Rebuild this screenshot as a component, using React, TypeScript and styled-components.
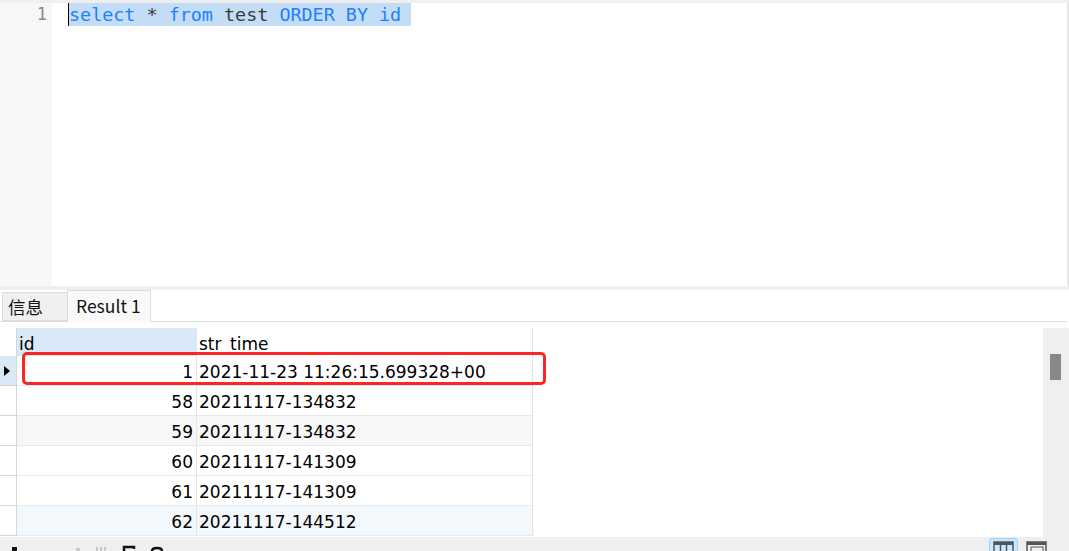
import React from "react";
import styled, { createGlobalStyle } from "styled-components";

const GlobalStyle = createGlobalStyle`
	body {
		margin: 0;
		background: #ffffff;
		overflow: hidden;
	}
`;

type Row = {
	id: number;
	time: string;
	tone: "plain" | "gray" | "blue";
};

const rows: Row[] = [
	{ id: 1, time: "2021-11-23 11:26:15.699328+00", tone: "plain" },
	{ id: 58, time: "20211117-134832", tone: "plain" },
	{ id: 59, time: "20211117-134832", tone: "gray" },
	{ id: 60, time: "20211117-141309", tone: "plain" },
	{ id: 61, time: "20211117-141309", tone: "plain" },
	{ id: 62, time: "20211117-144512", tone: "blue" },
];

const App = () => {
	return (
		<>
			<GlobalStyle />
			<Page>
				<TopStrip />
				<Editor>
					<Gutter>
						<LineNo>1</LineNo>
					</Gutter>
					<Code>
						<Selected>
							<Kw>select</Kw> * <Kw>from</Kw> test <Kw>ORDER BY</Kw> <Kw>id</Kw>
						</Selected>
					</Code>
				</Editor>
				<Splitter />
				<TabBar>
					<Tab active={false}>信息</Tab>
					<Tab active={true}>Result 1</Tab>
				</TabBar>
				<GridArea>
					<Grid>
						<IndicatorHead />
						<HeadCell selected={true}>id</HeadCell>
						<HeadCell selected={false}>str_time</HeadCell>
						{rows.map((r, i) => (
							<React.Fragment key={r.id}>
								<Indicator current={i === 0}>
									{i === 0 && (
										<svg width="6" height="10" viewBox="0 0 6 10">
											<path d="M0 0 L6 5 L0 10 Z" fill="#000" />
										</svg>
									)}
								</Indicator>
								<IdCell tone={r.tone}>
									{r.id}
									{i === 0 && <Mark />}
								</IdCell>
								<Cell tone={r.tone}>{r.time}</Cell>
							</React.Fragment>
						))}
					</Grid>
					<ScrollTrack>
						<Thumb />
					</ScrollTrack>
				</GridArea>
				<Toolbar>
					<Tools>
						<svg width="200" height="14" viewBox="0 0 200 14">
							<rect x="12" y="10" width="5" height="4" fill="#111" />
							<rect x="76" y="11" width="4" height="3" fill="#c8c8c8" />
							<rect x="96" y="10" width="2" height="4" fill="#c8c8c8" />
							<rect x="100" y="10" width="2" height="4" fill="#c8c8c8" />
							<rect x="104" y="10" width="2" height="4" fill="#c8c8c8" />
							<path d="M124 14 V10 H134 V12" stroke="#111" strokeWidth="2.5" fill="none" />
							<path d="M152 14 C152 10 162 10 162 14" stroke="#111" strokeWidth="2.5" fill="none" />
						</svg>
					</Tools>
					<ViewButtons>
						<ViewButton active={true}>
							<svg width="21" height="12" viewBox="0 0 21 12">
								<rect x="1" y="1" width="19" height="14" fill="none" stroke="#555" strokeWidth="1.5" />
								<rect x="1" y="1" width="19" height="3" fill="#555" />
								<line x1="7.5" y1="3" x2="7.5" y2="14" stroke="#555" strokeWidth="1.5" />
								<line x1="13.5" y1="3" x2="13.5" y2="14" stroke="#555" strokeWidth="1.5" />
							</svg>
						</ViewButton>
						<ViewButton active={false}>
							<svg width="21" height="12" viewBox="0 0 21 12">
								<rect x="1" y="1" width="19" height="14" fill="none" stroke="#555" strokeWidth="1.5" />
								<rect x="1" y="1" width="19" height="3" fill="#555" />
								<rect x="5" y="6" width="12" height="8" fill="none" stroke="#555" strokeWidth="1" />
							</svg>
						</ViewButton>
					</ViewButtons>
				</Toolbar>
			</Page>
		</>
	);
};

const Page = styled.div`
	display: flex;
	flex-direction: column;
	width: 1069px;
	height: 551px;
	overflow: hidden;
	background: #ffffff;
`;

const TopStrip = styled.div`
	height: 3px;
	background: #efefef;
`;

const Editor = styled.div`
	display: flex;
	height: 283px;
	border-right: 2px solid #e6e6e6;
`;

const Gutter = styled.div`
	width: 52px;
	background: #f7f7f7;
	display: flex;
	justify-content: flex-end;
`;

const LineNo = styled.div`
	padding-right: 5px;
	font-family: "DejaVu Sans Mono", "Liberation Mono", monospace;
	font-size: 17px;
	line-height: 23px;
	color: #8a8a8a;
`;

const Code = styled.div`
	flex: 1;
	padding-left: 17px;
	font-family: "DejaVu Sans Mono", "Liberation Mono", monospace;
	font-size: 18.4px;
	line-height: 23px;
	color: #3a3a3a;
	white-space: pre;
`;

const Selected = styled.span`
	display: inline-block;
	background: #c3ddf6;
	padding-right: 10px;
	border-left: 1.5px solid #000;
	margin-left: -1px;
`;

const Kw = styled.span`
	color: #1f7fff;
`;

const Splitter = styled.div`
	height: 4px;
	background: #efefef;
`;

const TabBar = styled.div`
	display: flex;
	align-items: flex-end;
	height: 32px;
	padding-left: 2px;
	margin-right: 2px;
	border-bottom: 1px solid #dcdcdc;
	box-sizing: border-box;
`;

const Tab = styled.div<{ active: boolean }>`
	display: flex;
	align-items: center;
	box-sizing: border-box;
	font-family: "Noto Sans CJK SC", "Noto Sans", sans-serif;
	font-size: 17.5px;
	color: #111;
	border: 1px solid #dcdcdc;
	${(props) =>
		props.active
			? "height: 32px; padding: 0 8px 2px; background: #f9f9f9; border-bottom: none; margin-bottom: -1px; width: 84px;"
			: "height: 29px; padding: 0 6px 0 5px; background: #f0f0f0; width: 65px; border-right: none;"}
`;

const GridArea = styled.div`
	flex: 1;
	display: flex;
	padding-top: 6px;
	min-height: 0;
`;

const Grid = styled.div`
	flex: 1;
	display: grid;
	grid-template-columns: 17px 180px 336px;
	grid-auto-rows: 30px;
	grid-template-rows: 28px;
	align-content: start;
	font-family: "DejaVu Sans", "Noto Sans CJK SC", sans-serif;
	font-size: 17px;
	color: #000;
`;

const IndicatorHead = styled.div`
	border-right: 1px solid #d6d6d6;
`;

const HeadCell = styled.div<{ selected: boolean }>`
	display: flex;
	align-items: center;
	padding: 3px 0 0 2px;
	background: ${(props) => (props.selected ? "#d9e9f7" : "#ffffff")};
	border-right: 1px solid #e4e4e4;
	overflow: hidden;
	white-space: nowrap;
`;

const Indicator = styled.div<{ current: boolean }>`
	display: flex;
	align-items: center;
	justify-content: center;
	background: ${(props) => (props.current ? "#d9e9f7" : "#ffffff")};
	border-right: 1px solid #d6d6d6;
	border-bottom: 1px solid #d6d6d6;
	padding-right: 2px;
`;

const toneBg = (tone: Row["tone"]) =>
	tone === "gray" ? "#f7f7f7" : tone === "blue" ? "#f3f8fd" : "#ffffff";

const Cell = styled.div<{ tone: Row["tone"] }>`
	display: flex;
	align-items: center;
	padding: 2px 0 0 2px;
	background: ${(props) => toneBg(props.tone)};
	border-right: 1px solid #e4e4e4;
	border-bottom: 1px solid #e8e8e8;
	white-space: nowrap;
	overflow: visible;
`;

const IdCell = styled(Cell)`
	position: relative;
	justify-content: flex-end;
	padding-left: 0;
	padding-right: 3px;
`;

const Mark = styled.div`
	position: absolute;
	left: 5px;
	top: -4px;
	width: 524px;
	height: 33px;
	box-sizing: border-box;
	border: 3px solid #ff2424;
	border-radius: 5px;
	pointer-events: none;
	z-index: 2;
`;

const ScrollTrack = styled.div`
	width: 26px;
	background: #efefef;
	position: relative;
`;

const Thumb = styled.div`
	position: absolute;
	left: 7px;
	top: 26px;
	width: 11px;
	height: 26px;
	background: #888888;
`;

const Toolbar = styled.div`
	display: flex;
	justify-content: space-between;
	height: 14px;
	background: #efefef;
	overflow: hidden;
`;

const Tools = styled.div`
	display: flex;
`;

const ViewButtons = styled.div`
	display: flex;
	gap: 4px;
	padding-right: 18px;
	padding-top: 1px;
`;

const ViewButton = styled.div<{ active: boolean }>`
	display: flex;
	justify-content: center;
	padding-top: 2px;
	width: 29px;
	height: 20px;
	box-sizing: border-box;
	border-radius: 3px;
	${(props) =>
		props.active
			? "background: #cce8ff; border: 1px solid #99d1ff;"
			: "border: 1px solid transparent;"}
`;

export default App;
